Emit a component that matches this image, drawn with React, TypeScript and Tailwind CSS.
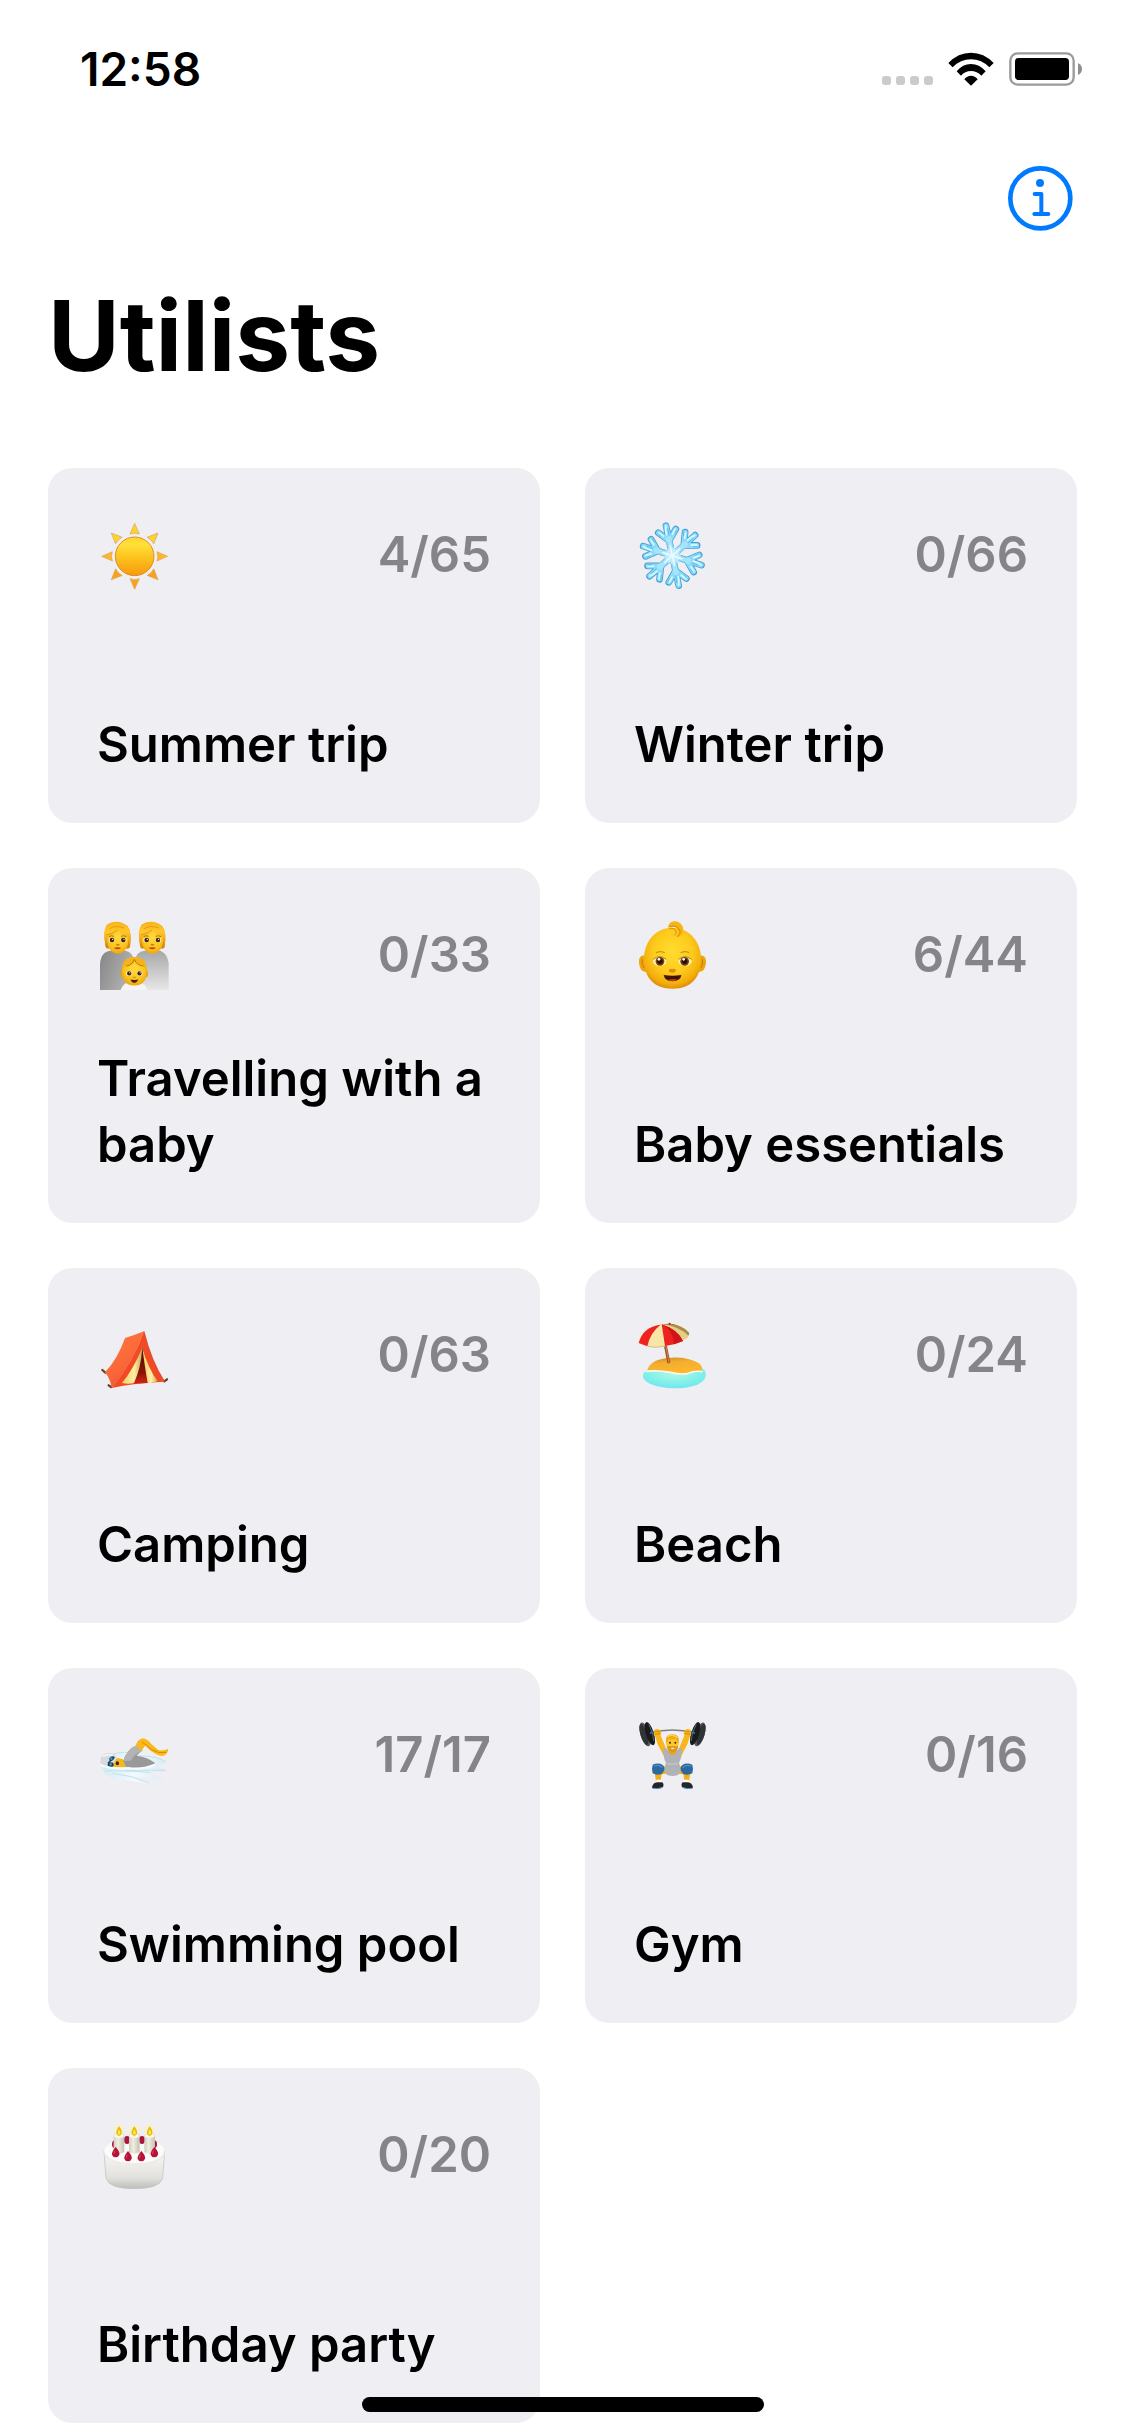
import type { ReactNode } from "react";

function Emoji({ label, children }: { label: string; children: ReactNode }) {
  return (
    <svg role="img" aria-label={label} viewBox="21 21 228 228" className="size-[76px] shrink-0">
      {children}
    </svg>
  );
}

const rays = [0, 45, 90, 135, 180, 225, 270, 315];

function Sun() {
  return (
    <Emoji label="Sun">
      <defs>
        <linearGradient id="sunDisc" x1="0" y1="0" x2="0" y2="1">
          <stop offset="0" stopColor="#fbd62c" />
          <stop offset="0.2" stopColor="#ffe13a" />
          <stop offset="0.5" stopColor="#fdc51f" />
          <stop offset="1" stopColor="#f79a0e" />
        </linearGradient>
      </defs>
      <circle cx="134" cy="139" r="62" fill="#fbf3ea" />
      <circle cx="134" cy="139" r="58" fill="url(#sunDisc)" stroke="#d98a35" strokeWidth="3" />
      {rays.map((a) => (
        <path
          key={a}
          d="M134 40 L148 72 Q134 67 120 72 Z"
          transform={`rotate(${a} 134 139)`}
          fill={a > 90 && a < 270 ? "#f6a51a" : a === 90 || a === 270 ? "#f9b824" : "#fbd52c"}
          stroke="#dfa260"
          strokeWidth="2"
          strokeLinejoin="round"
        />
      ))}
    </Emoji>
  );
}

const arms = [-12, 48, 108, 168, 228, 288];

function Snowflake() {
  return (
    <Emoji label="Snowflake">
      <g strokeLinecap="round" strokeLinejoin="round" fill="none">
        {arms.map((a) => (
          <g key={a} transform={`translate(136 137) rotate(${a})`}>
            <path d="M0 0 V-92 M0 -46 L-27 -76 M0 -46 L27 -76" stroke="#4a9fd6" strokeWidth="20" />
          </g>
        ))}
        {arms.map((a) => (
          <g key={a} transform={`translate(136 137) rotate(${a})`}>
            <path d="M0 0 V-91 M0 -46 L-26 -75 M0 -46 L26 -75" stroke="#8adcf8" strokeWidth="15" />
            <path d="M0 0 V-50" stroke="#a6e4fb" strokeWidth="18" />
            <path d="M-4 -65 Q-5 -80 0 -91 M-14 -63 L-25 -76 M14 -63 L25 -76" stroke="#dcf8ff" strokeWidth="5" />
            <path d="M-8 -26 V-42 M8 -26 V-42" stroke="#5cb9e6" strokeWidth="2" />
            <path d="M3 -62 V-82 M-22 -64 L-29 -73 M22 -64 L29 -73" stroke="#45b5e5" strokeWidth="2" />
          </g>
        ))}
        <circle cx="136" cy="137" r="22" fill="#c0edfd" />
        {arms.map((a) => (
          <path key={a} transform={`translate(136 137) rotate(${a})`} d="M0 0 V-30" stroke="#e9fbff" strokeWidth="5" />
        ))}
      </g>
    </Emoji>
  );
}

function Adult() {
  return (
    <g>
      <path d="M51 44 Q82 28 112 48 Q126 66 120 112 Q116 119 106 115 L58 115 Q48 119 46 108 Q40 62 51 44Z" fill="#d98909" />
      <path d="M49 68 Q49 50 83 48 Q118 52 117 78 Q117 112 101 125 Q84 137 66 125 Q49 112 49 68Z" fill="url(#skin)" />
      <path d="M53 80 Q70 76 86 64 Q99 78 115 80 L119 112 Q128 66 113 50 Q95 31 67 37 Q39 44 43 83 L47 109 Q53 98 53 80Z" fill="url(#hair)" />
      <path d="M58 57 Q75 44 102 54 M49 75 Q68 72 82 60" stroke="#d98b08" strokeWidth="2" fill="none" />
      <ellipse cx="65" cy="90" rx="9" ry="7" fill="#fff3cf" />
      <ellipse cx="101" cy="90" rx="9" ry="7" fill="#fff3cf" />
      <circle cx="66" cy="90" r="7" fill="#452510" />
      <circle cx="100" cy="90" r="7" fill="#452510" />
      <circle cx="68" cy="88" r="2" fill="#fff" />
      <circle cx="102" cy="88" r="2" fill="#fff" />
      <path d="M57 80 Q64 75 72 79 M93 79 Q101 75 109 80" stroke="#b37307" strokeWidth="3" fill="none" />
      <path d="M79 103 Q83 107 88 103" stroke="#cf7c05" strokeWidth="4" fill="none" />
      <path d="M71 113 Q83 110 94 113 Q84 123 71 113Z" fill="#b8461e" />
    </g>
  );
}

function Family() {
  return (
    <Emoji label="Family">
      <defs>
        <radialGradient id="skin" cx="0.5" cy="0.4" r="0.65">
          <stop offset="0" stopColor="#ffdb3d" />
          <stop offset="0.65" stopColor="#fbc420" />
          <stop offset="1" stopColor="#ed9e0c" />
        </radialGradient>
        <linearGradient id="hair" x1="0" y1="0" x2="0" y2="1">
          <stop offset="0" stopColor="#f8b51c" />
          <stop offset="0.4" stopColor="#ffc62a" />
          <stop offset="1" stopColor="#df8b08" />
        </linearGradient>
        <linearGradient id="coatLeft" x1="0" y1="0" x2="1" y2="0.4">
          <stop offset="0" stopColor="#858585" />
          <stop offset="1" stopColor="#b4b4b4" />
        </linearGradient>
        <linearGradient id="coatRight" x1="0" y1="0" x2="0" y2="1">
          <stop offset="0" stopColor="#a7a7a7" />
          <stop offset="1" stopColor="#e7e7e8" />
        </linearGradient>
      </defs>
      <path d="M30 240 V162 Q33 123 64 122 H105 Q129 124 136 160 V240Z" fill="url(#coatLeft)" />
      <path d="M132 240 V158 Q137 124 164 122 H211 Q233 132 236 160 V240Z" fill="url(#coatRight)" />
      <Adult />
      <g transform="translate(104 0)">
        <Adult />
      </g>
      <path d="M92 240 Q99 220 117 216 H147 Q166 221 173 240Z" fill="#f5f5f6" />
      <g transform="translate(133 182) scale(0.91)">
        <ellipse cx="-38" cy="10" rx="7" ry="12" fill="#e9a00e" />
        <ellipse cx="38" cy="10" rx="7" ry="12" fill="#e9a00e" />
        <path d="M-40 -4 Q-36 -44 0 -44 Q36 -44 40 -4 Q44 48 0 49 Q-44 48 -40 -4Z" fill="url(#skin)" />
        <path d="M-41 4 Q-44 -45 0 -45 Q44 -45 41 4 Q38 -12 26 -16 Q8 -20 2 -32 Q-8 -16 -26 -15 Q-38 -11 -41 4Z" fill="#f5b21a" />
        <path d="M-26 -15 Q-6 -18 0 -38 M1 -36 Q7 -18 30 -15" stroke="#b97008" strokeWidth="3" fill="none" />
        <ellipse cx="-18" cy="9" rx="9" ry="8" fill="#fff3cf" />
        <ellipse cx="18" cy="9" rx="9" ry="8" fill="#fff3cf" />
        <circle cx="-17" cy="9" r="7" fill="#3c200e" />
        <circle cx="17" cy="9" r="7" fill="#3c200e" />
        <circle cx="-15" cy="7" r="2" fill="#fff" />
        <circle cx="19" cy="7" r="2" fill="#fff" />
        <path d="M-5 21 Q0 25 5 21" stroke="#c87506" strokeWidth="3" fill="none" />
        <path d="M-13 29 Q0 32 13 29 Q8 40 0 40 Q-8 40 -13 29Z" fill="#53210c" />
      </g>
    </Emoji>
  );
}

function Baby() {
  return (
    <Emoji label="Baby">
      <defs>
        <radialGradient id="babySkin" cx="0.5" cy="0.4" r="0.62">
          <stop offset="0" stopColor="#ffdc2f" />
          <stop offset="0.55" stopColor="#fdcb1c" />
          <stop offset="0.85" stopColor="#f3ad0c" />
          <stop offset="1" stopColor="#da8606" />
        </radialGradient>
      </defs>
      <path d="M56 137 Q34 132 36 160 Q40 188 58 185Z M216 137 Q239 132 237 160 Q233 188 214 185Z" fill="#eda50b" />
      <path d="M46 148 Q42 160 51 174 M226 148 Q230 160 221 174" stroke="#c77707" strokeWidth="3" fill="none" />
      <path d="M136 53 C190 54 222 98 222 146 C222 202 192 236 137 236 C80 236 51 202 51 146 C51 98 82 54 136 53Z" fill="url(#babySkin)" />
      <path d="M124 55 C121 38 140 29 155 37 C171 46 173 66 162 76 Q154 84 146 77 Q158 75 155 63 C148 47 133 46 124 55Z" fill="#f7b512" />
      <path d="M128 50 Q151 43 159 63 Q161 75 150 80 M127 55 Q144 53 147 64 Q149 72 142 76" stroke="#d98a07" strokeWidth="3" fill="none" />
      <path d="M88 127 Q100 122 112 127 M162 127 Q174 122 186 127" stroke="#c98408" strokeWidth="3" fill="none" strokeLinecap="round" />
      <ellipse cx="98" cy="154" rx="20" ry="14" fill="#ffecb4" />
      <ellipse cx="174" cy="154" rx="20" ry="14" fill="#ffecb4" />
      <circle cx="99" cy="154" r="13" fill="#77410c" />
      <circle cx="173" cy="154" r="13" fill="#77410c" />
      <circle cx="99" cy="154" r="8" fill="#271306" />
      <circle cx="173" cy="154" r="8" fill="#271306" />
      <circle cx="96" cy="148" r="4" fill="#fff" />
      <circle cx="170" cy="148" r="4" fill="#fff" />
      <path d="M79 148 Q97 132 117 148 M155 148 Q175 132 193 148" stroke="#7d500b" strokeWidth="2" fill="none" />
      <path d="M125 182 Q126 175 135 177 Q146 174 147 182 Q143 189 136 188 Q128 189 125 182Z" fill="#e38a07" />
      <path d="M110 195 Q136 199 163 195 Q161 213 136 214 Q113 212 110 195Z" fill="#3e1506" />
      <path d="M121 210 Q137 204 152 209 Q137 217 121 210Z" fill="#c63c12" />
    </Emoji>
  );
}

function Tent() {
  return (
    <Emoji label="Tent">
      <defs>
        <linearGradient id="tentSide" x1="0.2" y1="0" x2="0.8" y2="1">
          <stop offset="0" stopColor="#ff7b3f" />
          <stop offset="0.6" stopColor="#fa6538" />
          <stop offset="1" stopColor="#dd3a22" />
        </linearGradient>
        <linearGradient id="tentInside" x1="0" y1="0" x2="0" y2="1">
          <stop offset="0" stopColor="#4a0b05" />
          <stop offset="0.7" stopColor="#8e1307" />
          <stop offset="1" stopColor="#d32712" />
        </linearGradient>
        <linearGradient id="tentFlap" x1="0" y1="0" x2="1" y2="0">
          <stop offset="0" stopColor="#f3ce62" />
          <stop offset="0.6" stopColor="#fff0a4" />
          <stop offset="1" stopColor="#c8a54c" />
        </linearGradient>
      </defs>
      <path d="M37 180 L46 188 M56 226 L63 231 M223 214 L231 208" stroke="#6a4529" strokeWidth="7" strokeLinecap="round" />
      <path d="M105 84 Q130 77 162 64 Q134 150 65 234 Q61 207 45 187 Q82 149 105 84Z" fill="url(#tentSide)" />
      <path d="M162 64 Q184 154 224 215 Q143 217 65 234 Q133 151 162 64Z" fill="#f34a26" />
      <path d="M162 64 Q184 154 224 215" stroke="#cc3d23" strokeWidth="2" fill="none" />
      <path d="M157 113 L190 218 L130 221Z" fill="url(#tentInside)" />
      <path d="M157 113 Q130 177 96 219 Q114 223 132 219 Q153 174 157 113Z" fill="url(#tentFlap)" />
      <path d="M157 113 Q176 179 203 213 Q187 222 173 218 Q165 174 157 113Z" fill="url(#tentFlap)" />
    </Emoji>
  );
}

function Beach() {
  return (
    <Emoji label="Beach with umbrella">
      <defs>
        <radialGradient id="sea" cx="0.5" cy="0.35" r="0.65">
          <stop offset="0" stopColor="#b6f7e6" />
          <stop offset="0.7" stopColor="#7cf0e9" />
          <stop offset="1" stopColor="#76e3f3" />
        </radialGradient>
        <linearGradient id="sand" x1="0" y1="0" x2="0.3" y2="1">
          <stop offset="0" stopColor="#c98a2a" />
          <stop offset="0.4" stopColor="#f4ad2e" />
          <stop offset="1" stopColor="#ffb72c" />
        </linearGradient>
      </defs>
      <path d="M55 182 Q88 160 142 166 Q225 158 236 188 Q241 210 211 224 Q160 242 97 230 Q45 218 48 194Z" fill="url(#sea)" />
      <path d="M61 181 Q68 151 119 144 Q177 137 216 160 Q230 174 224 184 Q202 181 184 190 Q157 194 133 186 Q93 181 61 181Z" fill="url(#sand)" />
      <path d="M57 184 Q91 180 131 187 Q162 195 184 190 Q204 181 225 185" stroke="#f8f8ee" strokeWidth="5" fill="none" strokeLinecap="round" />
      <path d="M111 108 L120 108 L130 158 Q125 162 121 159Z" fill="#9d4f20" />
      <path d="M117 110 L126 159" stroke="#d48a46" strokeWidth="3" />
      <path d="M35 99 Q41 54 105 43 Q161 35 187 69 L183 82 L168 92 L141 103 L115 109 L88 112 L61 109Z" fill="#f7e6a6" />
      <path d="M101 44 Q48 50 35 99 L61 109 Q69 68 101 44Z M104 43 Q109 75 114 108 L141 103 L168 93 Q154 61 104 43Z M105 43 Q140 36 162 53 Q134 43 105 43Z" fill="#ee2321" />
      <path d="M104 43 Q139 61 141 103 L168 93 Q154 58 104 43Z" fill="#cf1519" />
      <path d="M106 43 Q147 54 168 91 L184 81 Q165 50 106 43Z" fill="#e6cd86" />
      <path d="M107 43 Q160 50 184 78 L187 69 Q160 38 107 43Z" fill="#a9894c" />
      <circle cx="128" cy="41" r="3" fill="#b51d1e" />
      <path d="M62 109 L88 112 L114 108" stroke="#c9a45b" strokeWidth="2" fill="none" />
    </Emoji>
  );
}

function Swimmer() {
  return (
    <Emoji label="Swimmer">
      <defs>
        <linearGradient id="wave" x1="0" y1="0" x2="1" y2="0">
          <stop offset="0" stopColor="#d3eaf3" />
          <stop offset="0.5" stopColor="#f0fbff" />
          <stop offset="1" stopColor="#d8ebf2" />
        </linearGradient>
      </defs>
      <path d="M41 145 Q92 113 146 131 Q215 138 229 157 Q220 166 195 162 L231 184 Q194 183 166 186 Q204 197 222 211 Q171 200 128 201 Q160 208 187 223 Q116 211 82 208 Q49 201 39 184 Q57 187 69 188 Q31 180 31 168 Q61 154 41 145Z" fill="url(#wave)" />
      <path d="M69 132 Q105 123 132 130 M143 137 Q207 139 226 155 M43 183 Q102 181 181 187 M68 190 Q125 196 176 218 M104 181 Q170 180 227 181" stroke="#c3dfeb" strokeWidth="3" fill="none" />
      <path d="M68 144 Q99 142 110 157 Q115 170 103 173 L67 174 Q60 157 68 144Z" fill="#f6b917" />
      <path d="M31 158 Q28 129 57 129 Q77 129 80 145 L66 172 Q46 171 31 158Z" fill="#d9dadc" />
      <path d="M39 139 Q52 131 68 136" stroke="#f4f4f5" strokeWidth="5" fill="none" strokeLinecap="round" />
      <path d="M54 160 L73 140" stroke="#263b4c" strokeWidth="4" />
      <ellipse cx="65" cy="146" rx="8" ry="6" fill="#183b57" transform="rotate(-35 65 146)" />
      <ellipse cx="62" cy="164" rx="9" ry="7" fill="#183b57" />
      <circle cx="64" cy="146" r="4" fill="#3a94d5" />
      <circle cx="62" cy="163" r="4" fill="#3a94d5" />
      <ellipse cx="82" cy="160" rx="5" ry="6" fill="#48200b" />
      <path d="M100 153 Q109 119 141 105 L158 121 Q146 130 140 137 Q174 141 195 159 Q183 172 158 176 Q128 177 109 173Z" fill="#999" />
      <path d="M100 153 Q109 119 141 105 L158 121 Q132 132 123 152Z" fill="#b3b3b3" />
      <path d="M137 105 Q145 87 158 85 Q173 87 183 101 L205 120 Q219 124 234 117 Q237 122 228 132 Q219 143 199 133 Q180 123 166 107 L153 123Z" fill="#f9b91a" />
      <path d="M156 96 Q169 104 185 119 Q205 132 229 127" stroke="#d88905" strokeWidth="3" fill="none" />
      <path d="M34 167 Q72 177 115 174 Q155 180 192 165" stroke="#f5fcff" strokeWidth="6" fill="none" strokeLinecap="round" />
    </Emoji>
  );
}

function HalfLifter() {
  return (
    <g>
      <path d="M85 68 Q96 64 100 74 L118 118 L110 137 L92 103 L84 78Z" fill="#f9b61b" />
      <path d="M121 173 Q99 160 84 168 L80 187 Q102 196 123 190Z" fill="#f4ab16" />
      <path d="M83 190 H104 L101 213 H87Z" fill="#f5ae16" />
      <path d="M88 209 H103 L104 219 H87Z" fill="#fff" />
      <path d="M75 231 Q79 218 90 217 L105 217 Q112 221 108 231 Q101 238 77 235Z" fill="#252525" />
      <path d="M77 235 Q93 238 107 232" stroke="#4a98d5" strokeWidth="3" fill="none" />
      <path d="M77 164 Q94 157 107 165 Q120 176 104 192 Q90 197 77 190 Q73 177 77 164Z" fill="#2c69a0" />
      <path d="M82 168 Q97 163 106 173" stroke="#5290bf" strokeWidth="4" fill="none" />
      <g transform="rotate(-17 61 70)">
        <ellipse cx="54" cy="71" rx="14" ry="37" fill="#555a5c" />
        <ellipse cx="50" cy="70" rx="10" ry="33" fill="#303436" />
        <ellipse cx="68" cy="73" rx="12" ry="36" fill="#181a1c" />
        <path d="M73 46 Q79 73 73 98" stroke="#777d80" strokeWidth="2" fill="none" />
      </g>
      <path d="M69 69 L83 66" stroke="#316aaf" strokeWidth="6" />
      <path d="M82 60 Q94 53 102 64 Q105 75 96 79 Q86 83 80 74Z" fill="#f9b619" />
      <path d="M83 66 L99 64 M84 73 L100 71" stroke="#bd7106" strokeWidth="2" />
    </g>
  );
}

function Weightlifter() {
  return (
    <Emoji label="Weightlifter">
      <path d="M69 68 Q137 52 202 68" stroke="#7e7d83" strokeWidth="4" fill="none" />
      <HalfLifter />
      <g transform="translate(273 0) scale(-1 1)">
        <HalfLifter />
      </g>
      <path d="M108 116 Q118 110 125 124 H149 Q155 110 165 116 Q165 142 156 158 Q166 186 153 195 Q136 201 121 195 Q107 186 117 158 Q108 141 108 116Z" fill="#b1b2b5" />
      <path d="M121 160 Q136 165 153 160" stroke="#c5c6c9" strokeWidth="4" fill="none" />
      <path d="M121 112 H152 L148 128 Q137 139 125 128Z" fill="#e8a317" />
      <path d="M119 84 Q136 72 154 84 Q158 105 150 117 Q137 130 123 117 Q115 103 119 84Z" fill="#fdc82b" />
      <path d="M117 101 Q112 73 136 73 Q160 73 155 101 Q149 94 147 86 Q136 91 124 86 Q122 96 117 101Z" fill="#efaa19" />
      <path d="M121 80 Q137 71 151 83" stroke="#ffd346" strokeWidth="4" fill="none" />
      <path d="M119 107 Q128 110 137 107 Q146 110 154 107 Q152 124 137 126 Q122 124 119 107Z" fill="#dd981b" />
      <circle cx="129" cy="98" r="3" fill="#49250c" />
      <circle cx="145" cy="98" r="3" fill="#49250c" />
      <path d="M130 115 Q137 111 144 115 Q137 120 130 115Z" fill="#fff0df" />
    </Emoji>
  );
}

function Candle({ x }: { x: number }) {
  return (
    <g transform={`translate(${x} 0)`}>
      <ellipse cx="0" cy="64" rx="17" ry="22" fill="#fff2aa" opacity="0.45" />
      <path d="M-16 77 Q-16 71 0 70 Q16 71 16 77 V126 Q0 136 -16 126Z" fill="url(#candleWax)" />
      <ellipse cx="0" cy="77" rx="15" ry="6" fill="#f8f7e8" />
      <path d="M0 49 Q10 61 8 70 Q6 78 0 78 Q-7 78 -8 70 Q-9 61 0 49Z" fill="#e7b80d" />
      <path d="M0 58 Q5 66 4 71 Q0 76 -4 71 Q-5 65 0 58Z" fill="#ffeb45" />
    </g>
  );
}

const backBerries = [
  { x: 75, y: 103 },
  { x: 111, y: 90 },
  { x: 156, y: 90 },
  { x: 192, y: 103 },
];
const frontBerries = [
  { x: 77, y: 127 },
  { x: 114, y: 139 },
  { x: 154, y: 139 },
  { x: 193, y: 127 },
];

function Cake() {
  return (
    <Emoji label="Birthday cake">
      <defs>
        <linearGradient id="cakeSide" x1="0" y1="0" x2="0" y2="1">
          <stop offset="0" stopColor="#f8f8f6" />
          <stop offset="0.7" stopColor="#e3e2df" />
          <stop offset="1" stopColor="#bdbfb9" />
        </linearGradient>
        <linearGradient id="candleWax" x1="0" y1="0" x2="1" y2="0">
          <stop offset="0" stopColor="#d0cec0" />
          <stop offset="0.4" stopColor="#f0eee1" />
          <stop offset="1" stopColor="#c5c2b5" />
        </linearGradient>
      </defs>
      <path d="M42 122 L48 204 Q56 236 133 236 Q210 236 218 204 L224 122Z" fill="url(#cakeSide)" stroke="#bcbeb9" strokeWidth="2" />
      <path d="M42 122 Q51 87 133 87 Q216 87 224 122 Q219 159 133 160 Q49 159 42 122Z" fill="#fbfbfa" />
      <path d="M43 128 Q53 161 133 162 Q213 161 223 128" stroke="#ecebe7" strokeWidth="5" fill="none" />
      {backBerries.map(({ x, y }) => (
        <ellipse key={x} cx={x} cy={y} rx="9" ry="12" fill="#ab173a" />
      ))}
      <Candle x={87} />
      <Candle x={133} />
      <Candle x={179} />
      {frontBerries.map(({ x, y }) => (
        <g key={x} transform={`translate(${x} ${y})`}>
          <path d="M0 -16 Q14 -1 11 7 Q8 15 0 15 Q-8 15 -11 7 Q-13 -1 0 -16Z" fill="#b81237" />
          <path d="M-3 -4 L-5 4" stroke="#db4667" strokeWidth="3" strokeLinecap="round" />
        </g>
      ))}
    </Emoji>
  );
}

const lists = [
  { title: "Summer trip", count: "4/65", icon: <Sun /> },
  { title: "Winter trip", count: "0/66", icon: <Snowflake /> },
  { title: "Travelling with a baby", count: "0/33", icon: <Family /> },
  { title: "Baby essentials", count: "6/44", icon: <Baby /> },
  { title: "Camping", count: "0/63", icon: <Tent /> },
  { title: "Beach", count: "0/24", icon: <Beach /> },
  { title: "Swimming pool", count: "17/17", icon: <Swimmer /> },
  { title: "Gym", count: "0/16", icon: <Weightlifter /> },
  { title: "Birthday party", count: "0/20", icon: <Cake /> },
];

function StatusBar() {
  return (
    <div className="flex items-center justify-between pt-[42px] pr-[43px] pl-20">
      <time className="text-[46px] leading-[54px] font-semibold">12:58</time>
      <div className="flex items-center">
        <div className="mt-[22px] mr-[15px] flex gap-[5px]" aria-label="No signal">
          <span className="size-[9px] rounded-[3px] bg-[#cbcbcb]" />
          <span className="size-[9px] rounded-[3px] bg-[#cbcbcb]" />
          <span className="size-[9px] rounded-[3px] bg-[#cbcbcb]" />
          <span className="size-[9px] rounded-[3px] bg-[#cbcbcb]" />
        </div>
        <svg role="img" aria-label="Wi-Fi" viewBox="0 0 138 100" className="mr-[15px] h-[34px] w-[46px]">
          <path d="M1 32 Q30 1 69 1 Q108 1 137 32 L124 45 Q101 21 69 21 Q37 21 14 45Z" />
          <path d="M26 57 Q44 35 69 35 Q94 35 113 57 L100 70 Q87 56 69 56 Q51 56 39 70Z" />
          <path d="M49 81 Q57 70 69 70 Q81 70 89 81 L69 100Z" />
        </svg>
        <svg role="img" aria-label="Battery full" viewBox="0 0 219 102" className="h-[34px] w-[73px]">
          <rect x="4" y="4" width="190" height="94" rx="22" fill="none" stroke="#9a9a9a" strokeWidth="7" />
          <rect x="18" y="18" width="162" height="66" rx="11" />
          <path d="M207 33 Q219 39 219 51 Q219 63 207 69Z" fill="#8e8e8e" />
        </svg>
      </div>
    </div>
  );
}

export default function App() {
  return (
    <div className="relative min-h-screen bg-white font-[Inter,sans-serif] text-black">
      <StatusBar />
      <header className="px-12 pt-[70px]">
        <div className="flex justify-end pr-1">
          <button type="button" aria-label="About" className="size-[65px] text-[#007aff]">
            <svg viewBox="0 0 195 195" className="size-full" fill="none" stroke="currentColor" strokeLinecap="round" strokeLinejoin="round">
              <circle cx="97" cy="97" r="90" strokeWidth="14" />
              <circle cx="96" cy="51" r="12" fill="currentColor" stroke="none" />
              <path d="M80 84 H100 V144 M79 144 H121" strokeWidth="12" />
            </svg>
          </button>
        </div>
        <h1 className="mt-[45px] text-[98px] leading-[120px] font-bold">Utilists</h1>
      </header>
      <main className="px-12 pt-[72px] pb-[13px]">
        <ul className="grid grid-cols-2 gap-[45px]">
          {lists.map(({ title, count, icon }) => (
            <li key={title}>
              <button
                type="button"
                className="flex min-h-[355px] w-full flex-col justify-between rounded-3xl bg-[#efeef3] px-[49px] pt-[49px] pb-[45px] text-left text-[49px] leading-[66px] font-semibold"
              >
                <span className="flex w-full items-center justify-between">
                  {icon}
                  <span className="text-[#858489]">{count}</span>
                </span>
                <span>{title}</span>
              </button>
            </li>
          ))}
        </ul>
      </main>
      <div className="absolute bottom-6 left-1/2 h-[15px] w-[402px] -translate-x-1/2 rounded-full bg-black" />
    </div>
  );
}
